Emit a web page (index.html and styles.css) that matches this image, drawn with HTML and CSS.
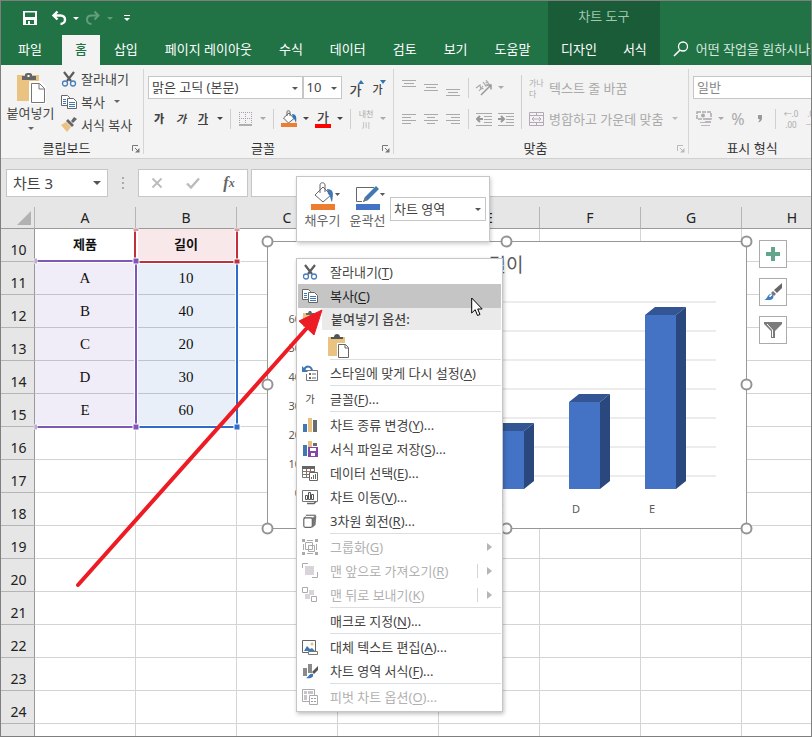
FILE: index.html
```html
<!DOCTYPE html>
<html lang="ko">
<head>
  <meta charset="UTF-8" />
  <meta name="viewport" content="width=device-width, initial-scale=1.0" />
  <title>차트 복사</title>
  <link rel="stylesheet" href="styles.css">
</head>
<body>
  <div class="window">
    <header class="top">
      <div class="top-main">
        <div class="quick">
          <button class="tool" aria-label="저장"><svg width="16" height="16" viewBox="0 0 16 16"><path d="M1 1h14v14H1z" fill="#fff"/><path d="M3 2.500h10V7H3zM4 10h8v4H4z" fill="#217346"/><path d="M6 11h2v3H6z" fill="#fff"/></svg></button>
          <button class="tool undo" aria-label="실행 취소"><svg width="16" height="16" viewBox="0 0 16 16"><path d="M6.500 1.500L2.500 5.500l4 4M3 5.500h6.500c3 0 4.500 1.800 4.500 4s-1.500 4.500-4.500 4.500" fill="none" stroke="#fff" stroke-width="2.400"/></svg></button>
          <button class="caret" aria-label="실행 취소 목록"></button>
          <button class="tool faded" aria-label="다시 실행"><svg width="16" height="16" viewBox="0 0 16 16"><path d="M9.500 1.500l4 4-4 4M13 5.500H6.500C3.500 5.500 2 7.300 2 9.500S3.500 14 6.500 14" fill="none" stroke="#fff" stroke-width="2"/></svg></button>
          <button class="caret faded" aria-label="다시 실행 목록"></button>
          <button class="tool" aria-label="빠른 실행 도구 모음 사용자 지정"><svg width="8" height="8" viewBox="0 0 8 8"><path d="M1 1.500h6" stroke="#fff"/><path d="M1 4h6L4 7z" fill="#fff"/></svg></button>
        </div>
        <nav class="tabs">
          <button class="tab file">파일</button>
          <button class="tab active">홈</button>
          <button class="tab">삽입</button>
          <button class="tab">페이지 레이아웃</button>
          <button class="tab">수식</button>
          <button class="tab">데이터</button>
          <button class="tab">검토</button>
          <button class="tab">보기</button>
          <button class="tab">도움말</button>
        </nav>
      </div>
      <div class="top-context">
        <div class="context-title">차트 도구</div>
        <nav class="tabs">
          <button class="tab">디자인</button>
          <button class="tab">서식</button>
        </nav>
      </div>
      <div class="tell">
        <svg width="16" height="16" viewBox="0 0 16 16"><circle cx="10" cy="5.500" r="4.500" fill="none" stroke="#fff" stroke-width="1.300"/><path d="M7 9l-6 6" stroke="#fff" stroke-width="1.600"/></svg>
        <input type="text" aria-label="작업 검색" placeholder="어떤 작업을 원하시나요?">
      </div>
    </header>

    <section class="ribbon">
      <div class="group clipboard">
        <div class="group-body">
          <button class="paste">
            <svg width="30" height="32" viewBox="0 0 30 32"><path d="M1 3h22v26H1z" fill="#eac282"/><path d="M6 8V4h3V2l2-1h3l2 1v2h4v4z" fill="#666"/><path d="M11.500 3h2v2h-2z" fill="#fff"/><path d="M14 10h10l5 5v16H14z" fill="#fff" stroke="#fff" stroke-width="2"/><path d="M15.500 11.500h8l5 5v14h-13zM23 11.500v5.500h5.500" fill="#fff" stroke="#777"/></svg>
            <span>붙여넣기</span>
            <i class="tri"></i>
          </button>
          <div class="clip-list">
            <button class="wide"><svg width="16" height="16" viewBox="0 0 16 16"><use href="#i-cut"/></svg>잘라내기</button>
            <button class="wide"><svg width="16" height="16" viewBox="0 0 16 16"><use href="#i-copy"/></svg>복사<i class="tri far"></i></button>
            <button class="wide"><svg width="16" height="16" viewBox="0 0 16 16"><path d="M0 8l5-3 5 5-4 5z" fill="#eac282"/><path d="M5 4l2-2 6 6-2 2zM10 4l3-4 3 2-4 4z" fill="#666"/></svg>서식 복사</button>
          </div>
        </div>
        <div class="group-foot"><span>클립보드</span><button class="launch" aria-label="클립보드 설정"><svg width="8" height="8" viewBox="0 0 8 8"><use href="#i-launch"/></svg></button></div>
      </div>

      <div class="group font">
        <div class="group-body rows">
          <div class="row">
            <span class="pick font-name"><select aria-label="글꼴"><option>맑은 고딕 (본문)</option></select></span>
            <span class="pick font-size"><select aria-label="글꼴 크기"><option>10</option></select></span>
            <button class="tool grow" aria-label="글꼴 크게">가<svg width="6" height="4" viewBox="0 0 6 4"><path d="M0 4h6L3 0z" fill="#2e75b6"/></svg></button>
            <button class="tool shrink" aria-label="글꼴 작게">가<svg width="6" height="4" viewBox="0 0 6 4"><path d="M0 0h6L3 4z" fill="#2e75b6"/></svg></button>
          </div>
          <div class="row">
            <button class="tool letter" aria-label="굵게"><b>가</b></button>
            <button class="tool letter" aria-label="기울임꼴"><em>가</em></button>
            <button class="tool letter" aria-label="밑줄"><u>가</u></button>
            <button class="caret" aria-label="밑줄 종류"></button>
            <span class="bar"></span>
            <button class="tool off" aria-label="테두리"><svg width="14" height="14" viewBox="0 0 14 14"><path d="M.5 0v12M6.500 0v12M12.500 0v12M0 .5h13M0 6.500h13" stroke="#b09cb4" stroke-dasharray="1 1"/><path d="M0 13h13" stroke="#999" stroke-width="1.500"/></svg></button>
            <button class="caret off" aria-label="테두리 종류"></button>
            <span class="bar"></span>
            <button class="tool" aria-label="채우기 색"><svg width="17" height="17" viewBox="0 0 17 17"><path d="M2.500 8l5.500-5 5 5.500-5.500 4.500z" fill="#fff" stroke="#666"/><path d="M6 6V1.500C6 .5 9 .5 9 2v4" fill="none" stroke="#666"/><path d="M11 4c4 0 5 3 4 9-1-2-1-4-3-5z" fill="#2e75b6"/><path d="M0 13h16v4H0z" fill="#ed7d31"/></svg></button>
            <button class="caret" aria-label="채우기 색 목록"></button>
            <button class="tool font-color" aria-label="글꼴 색">가</button>
            <button class="caret" aria-label="글꼴 색 목록"></button>
            <span class="bar"></span>
            <button class="tool off ruby" aria-label="윗주"><span>내천</span><span>川</span></button>
            <button class="caret off" aria-label="윗주 목록"></button>
          </div>
        </div>
        <div class="group-foot"><span>글꼴</span><button class="launch" aria-label="글꼴 설정"><svg width="8" height="8" viewBox="0 0 8 8"><use href="#i-launch"/></svg></button></div>
      </div>

      <div class="group align">
        <div class="group-body">
          <div class="rows">
            <div class="row">
              <button class="tool off" aria-label="위쪽 맞춤"><svg width="14" height="18" viewBox="0 0 14 18"><path d="M0 1.500h14M2 4.500h10M0 7.500h14" stroke="#aaa"/></svg></button>
              <button class="tool off" aria-label="가운데 맞춤"><svg width="14" height="18" viewBox="0 0 14 18"><path d="M0 5.500h14M2 8.500h10M0 11.500h14" stroke="#aaa"/></svg></button>
              <button class="tool off" aria-label="아래쪽 맞춤"><svg width="14" height="18" viewBox="0 0 14 18"><path d="M0 10.500h14M2 13.500h10M0 16.500h14" stroke="#aaa"/></svg></button>
              <span class="bar"></span>
              <button class="tool off" aria-label="방향"><svg width="18" height="18" viewBox="0 0 18 18"><path d="M6 16L16 6M11.500 6H16v4.500" fill="none" stroke="#999" stroke-width="1.500"/><path d="M1 9l4-3 1 5M4 12l4-5M6.500 9l2 1M8 3l3 4 2-2M11 1l3 4M12.500 3l-2 1" fill="none" stroke="#aaa" stroke-width="1.200"/></svg></button>
              <button class="caret off" aria-label="방향 목록"></button>
            </div>
            <div class="row">
              <button class="tool off" aria-label="왼쪽 맞춤"><svg width="14" height="12" viewBox="0 0 14 12"><path d="M0 1.500h14M0 4.500h9M0 7.500h14M0 10.500h9" stroke="#aaa"/></svg></button>
              <button class="tool off" aria-label="가운데"><svg width="14" height="12" viewBox="0 0 14 12"><path d="M0 1.500h14M3 4.500h8M0 7.500h14M3 10.500h8" stroke="#aaa"/></svg></button>
              <button class="tool off" aria-label="오른쪽 맞춤"><svg width="14" height="12" viewBox="0 0 14 12"><path d="M0 1.500h14M5 4.500h9M0 7.500h14M5 10.500h9" stroke="#aaa"/></svg></button>
              <span class="bar"></span>
              <button class="tool off" aria-label="내어쓰기"><svg width="16" height="14" viewBox="0 0 16 14"><path d="M0 1.500h16M8 4.500h8M8 7.500h8M8 10.500h8M0 13.500h16" stroke="#aaa"/><path d="M7 7H2M4 4L1 7l3 3" fill="none" stroke="#999" stroke-width="2"/></svg></button>
              <button class="tool off" aria-label="들여쓰기"><svg width="16" height="14" viewBox="0 0 16 14"><path d="M0 1.500h16M8 4.500h8M8 7.500h8M8 10.500h8M0 13.500h16" stroke="#aaa"/><path d="M0 7h5M3 4l3 3-3 3" fill="none" stroke="#999" stroke-width="2"/></svg></button>
            </div>
          </div>
          <span class="bar tall"></span>
          <div class="rows">
            <div class="row"><button class="wide off"><span class="wrap-icon"><span>가나</span><span>다</span></span>텍스트 줄 바꿈</button></div>
            <div class="row"><button class="wide off"><svg width="16" height="16" viewBox="0 0 16 16"><path d="M.5 1.500h14v13H.5zM.5 4.500h14M.5 11.500h14M7.500 1.500v3M7.500 11.500v3M3 8h9M5 6L3 8l2 2M10 6l2 2-2 2" fill="none" stroke="#b3a9b5"/></svg>병합하고 가운데 맞춤<i class="tri far"></i></button></div>
          </div>
        </div>
        <div class="group-foot"><span>맞춤</span><button class="launch off" aria-label="맞춤 설정"><svg width="8" height="8" viewBox="0 0 8 8"><use href="#i-launch"/></svg></button></div>
      </div>

      <div class="group number">
        <div class="group-body rows">
          <div class="row"><span class="pick format"><select aria-label="표시 형식"><option>일반</option></select></span></div>
          <div class="row">
            <button class="tool off" aria-label="회계 표시 형식"><svg width="17" height="16" viewBox="0 0 17 16"><path d="M1 1h14v7H1z" fill="none" stroke="#aaa" stroke-width="1.500" stroke-dasharray="4 1"/><circle cx="7" cy="4.500" r="2" fill="#aaa"/><path d="M10 7h5v2h-5zM9 10h6v2H9zM4 11h5v1H4zM5 14h9v1H5z" fill="#bdb4bf"/></svg></button>
            <button class="caret off" aria-label="통화 목록"></button>
            <button class="tool off percent" aria-label="백분율">%</button>
            <button class="tool off" aria-label="쉼표 스타일"><svg width="6" height="9" viewBox="0 0 6 9"><path d="M1 1h4v3c0 2-1 3.500-4 4.500 1-1.500 1.500-2 1.500-3.500H1z" fill="#999"/></svg></button>
            <span class="bar"></span>
            <button class="tool off digits" aria-label="자릿수 늘림"><span>←.0</span><span>.00</span></button>
            <button class="tool off digits" aria-label="자릿수 줄임"><span>.00</span><span>→.0</span></button>
          </div>
        </div>
        <div class="group-foot"><span>표시 형식</span></div>
      </div>
    </section>

    <div class="formula">
      <span class="pick name-box"><select aria-label="이름 상자"><option>차트 3</option></select></span>
      <span class="dots"><svg width="4" height="12" viewBox="0 0 4 12"><path d="M1 0h2v2H1zM1 5h2v2H1zM1 10h2v2H1z" fill="#aaa"/></svg></span>
      <div class="formula-tools">
        <button aria-label="취소"><svg width="12" height="12" viewBox="0 0 12 12"><path d="M1.500 1.500l9 9M10.500 1.500l-9 9" stroke="#bbb" stroke-width="1.800"/></svg></button>
        <button aria-label="입력"><svg width="14" height="12" viewBox="0 0 14 12"><path d="M1 6.500l4 4L13 1.500" fill="none" stroke="#bbb" stroke-width="2.400"/></svg></button>
        <button class="fx" aria-label="함수 삽입">f<small>x</small></button>
      </div>
      <input class="formula-input" type="text" aria-label="수식 입력줄">
    </div>

    <main class="sheet">
      <table class="grid">
        <thead>
          <tr>
            <th class="corner"><svg width="14" height="14" viewBox="0 0 14 14"><path d="M14 0v14H0z" fill="#b2b2b2"/></svg></th>
            <th>A</th><th>B</th><th>C</th><th>D</th><th>E</th><th>F</th><th>G</th><th>H</th>
          </tr>
        </thead>
        <tbody id="rows"></tbody>
      </table>

      <!-- source ranges of the chart -->
      <svg class="ranges" width="240" height="230" viewBox="0 0 240 230" fill="none">
        <path d="M34 54H135V220H34M135 23V55H236V23M236 55V220H135" stroke="#fff" stroke-width="4"/>
        <path d="M236 55V220H135" stroke="#2f6bc8" stroke-width="2"/>
        <path d="M134 23V55H236V23" stroke="#c0303c" stroke-width="2"/>
        <path d="M34 54H135V220H34" stroke="#7e57b8" stroke-width="2"/>
        <path d="M132 22h6v2h-6zM233 22h6v2h-6zM233 52h6v5h-6z" fill="#c0303c" stroke="#fff"/>
        <path d="M132 51h6v6h-6zM132 217h6v6h-6zM34 51h2v6h-2zM34 217h2v6h-2z" fill="#7e57b8" stroke="#fff"/>
        <path d="M233 217h6v6h-6z" fill="#2f6bc8" stroke="#fff"/>
      </svg>

      <svg class="chart" width="494" height="302" viewBox="0 0 494 302" role="img" aria-label="길이">
        <rect x="7.500" y="7.500" width="479" height="287" fill="#fff" stroke="#979797"/>
        <text class="chart-title" x="246" y="38">길이</text>
        <g id="chart-lines"></g>
        <g id="chart-bars"></g>
        <g fill="#fff" stroke="#949494" stroke-width="2">
          <circle cx="7.500" cy="7.500" r="5"/><circle cx="246.500" cy="7.500" r="5"/><circle cx="486.500" cy="7.500" r="5"/>
          <circle cx="7.500" cy="150.500" r="5"/><circle cx="486.500" cy="150.500" r="5"/>
          <circle cx="7.500" cy="294.500" r="5"/><circle cx="246.500" cy="294.500" r="5"/><circle cx="486.500" cy="294.500" r="5"/>
        </g>
      </svg>

      <div class="chart-tools">
        <button aria-label="차트 요소"><svg width="16" height="16" viewBox="0 0 16 16"><path d="M6 1h4v5h5v4h-5v5H6v-5H1V6h5z" fill="#63a58b"/></svg></button>
        <button aria-label="차트 스타일"><svg width="20" height="20" viewBox="0 0 20 20"><path d="M19 1v5l-5 5-3-3z" fill="#666"/><path d="M10 9l3 3-2 2-3-3z" fill="#777"/><path d="M1 18c4-1 3-7 8-6 3 2 1 6-2 6z" fill="#3f7fbf"/><path d="M7 15c0-1 1-2 2-2" stroke="#fff" fill="none" stroke-width="1.500"/></svg></button>
        <button aria-label="차트 필터"><svg width="18" height="18" viewBox="0 0 18 18"><path d="M0 1h18v2l-7 7v7H7v-7L0 3z" fill="#7b7b7b"/><path d="M3 3l5.500 6v7" fill="none" stroke="#fff"/></svg></button>
      </div>
    </main>

    <div class="mini">
      <button class="mini-button">
        <svg width="36" height="30" viewBox="0 0 36 30"><path d="M10 14l8-8 8 8-8 7z" fill="#fff" stroke="#666"/><path d="M15 12V4c0-3 5-3 5 0v7" fill="none" stroke="#666"/><path d="M22 8c6 0 7 3 5 13-2-3-1-6-4-8z" fill="#3f78b5"/><path d="M6 23h24v6H6z" fill="#ed7d31"/><path d="M30 12h5l-2.500 3z" fill="#555"/></svg>
        채우기
      </button>
      <button class="mini-button">
        <svg width="36" height="30" viewBox="0 0 36 30"><path d="M24 6.500H6.500v14H12" fill="none" stroke="#666"/><path d="M13 21l2-5L26 5l3 3-11 11z" fill="#3f78b5"/><path d="M13 21l2-5 3 3z" fill="#777"/><path d="M6 23h24v6H6z" fill="#4472c4"/><path d="M30 12h5l-2.500 3z" fill="#555"/></svg>
        윤곽선
      </button>
      <span class="pick element"><select aria-label="차트 요소"><option>차트 영역</option></select></span>
    </div>

    <div class="menu" role="menu">
      <button class="item" role="menuitem"><svg width="16" height="16" viewBox="0 0 16 16"><use href="#i-cut"/></svg><span>잘라내기(<u>T</u>)</span></button>
      <button class="item selected" role="menuitem"><svg width="16" height="16" viewBox="0 0 16 16"><use href="#i-copy"/></svg><span>복사(<u>C</u>)</span></button>
      <div class="paste-head"><svg width="16" height="16" viewBox="0 0 16 16"><path d="M1 2h14v14H1z" fill="#eac282"/><path d="M4 4V2h2l1-2h2l1 2h2v2z" fill="#666"/></svg><span>붙여넣기 옵션:</span></div>
      <div class="paste-row"><button aria-label="붙여넣기"><svg width="22" height="24" viewBox="0 0 22 24"><path d="M0 3h17v19H0z" fill="#eac282"/><path d="M3 5V3h3c0-4 6-4 6 0h3v2z" fill="#555"/><path d="M9 9h9l4 4v11H9z" fill="#fff"/><path d="M10.500 10.500h7l3 3v10h-10zM17 10.500v3.500h3.500" fill="#fff" stroke="#666"/></svg></button></div>
      <hr>
      <button class="item" role="menuitem"><svg width="16" height="16" viewBox="0 0 16 16"><path d="M4 5.500h11.500v10H4.500V9" fill="#fff" stroke="#777"/><path d="M7 8h2v2H7zM7 12h2v2H7zM10 8.500h4v1h-4zM10 12.500h4v1h-4z" fill="#666"/><path d="M2 5c2-5 7-4 8 0" fill="none" stroke="#3f78b5" stroke-width="2"/><path d="M0 1v6h6z" fill="#3f78b5"/></svg><span>스타일에 맞게 다시 설정(<u>A</u>)</span></button>
      <hr>
      <button class="item" role="menuitem"><span class="glyph">가</span><span>글꼴(<u>F</u>)...</span></button>
      <hr>
      <button class="item" role="menuitem"><svg width="16" height="16" viewBox="0 0 16 16"><path d="M1 7h4v8H1z" fill="#3f78b5"/><path d="M6 1h4v14H6z" fill="#e8bf7c"/><path d="M11 3h4v12h-4z" fill="#6b6b6b"/></svg><span>차트 종류 변경(<u>Y</u>)...</span></button>
      <button class="item" role="menuitem"><svg width="16" height="16" viewBox="0 0 16 16"><path d="M1 4h4v11H1z" fill="#3f78b5"/><path d="M6 0h4v6H6z" fill="#e8bf7c"/><path d="M11 2h4v3h-4z" fill="#6b6b6b"/><path d="M6 6h10v10H6z" fill="#8347a8"/><path d="M8 7h6v3H8zM9 12h4v3H9z" fill="#fff"/></svg><span>서식 파일로 저장(<u>S</u>)...</span></button>
      <button class="item" role="menuitem"><svg width="16" height="16" viewBox="0 0 16 16"><path d="M.5 1.500h12v11H.5zM.5 6.500h12M.5 9.500h12M4.500 3v9M8.500 3v9" fill="#fff" stroke="#777"/><path d="M0 1h13v3H0z" fill="#666"/><path d="M5 6.500h4" stroke="#d9632b"/><path d="M7.500 7.500h8v8h-8z" fill="#fff" stroke="#666"/><path d="M9 12h1v2H9zM11 10h1v4h-1zM13 9h1v5h-1z" fill="#666"/></svg><span>데이터 선택(<u>E</u>)...</span></button>
      <button class="item" role="menuitem"><svg width="16" height="16" viewBox="0 0 16 16"><path d="M.5 1.500h15v11H.5z" fill="#fff" stroke="#777"/><path d="M3.500 6.500h2v4h-2zM6.500 3.500h2v7h-2zM9.500 5.500h2v5h-2z" fill="none" stroke="#555"/><path d="M5 14.500h7l2-2" fill="none" stroke="#666" stroke-width="1.500"/></svg><span>차트 이동(<u>V</u>)...</span></button>
      <button class="item" role="menuitem"><svg width="16" height="16" viewBox="0 0 16 16"><path d="M1.500 5l3-3h9l.8 1.500-.8 8.500-3 2.500" fill="#777"/><path d="M4 2.500h9l-2 2H3z" fill="#fff"/><rect x="1.800" y="4.800" width="8.500" height="9.500" rx="1.500" fill="#fff" stroke="#666" stroke-width="1.200"/><path d="M4 2.200h9.500" stroke="#666"/></svg><span>3차원 회전(<u>R</u>)...</span></button>
      <hr>
      <button class="item" role="menuitem" disabled><svg width="16" height="16" viewBox="0 0 16 16"><path d="M0 0h3v3H0zM13 0h3v3h-3zM0 13h3v3H0zM13 13h3v3h-3z" fill="#aaa"/><path d="M3.500 3.500h7v7h-7zM6.500 6.500h6v6h-6zM5 1.500h6M5 14.500h6M1.500 5v6M14.500 5v6" fill="none" stroke="#aaa"/></svg><span>그룹화(<u>G</u>)</span><i class="sub"></i></button>
      <button class="item" role="menuitem" disabled><svg width="16" height="16" viewBox="0 0 16 16"><path d="M3 3h9v9H3z" fill="#d9d3da"/><path d="M.5 5V.5H6M10 14.500h5.500V9" fill="none" stroke="#aaa"/></svg><span>맨 앞으로 가져오기(<u>R</u>)</span><i class="sub split"></i></button>
      <button class="item" role="menuitem" disabled><svg width="16" height="16" viewBox="0 0 16 16"><path d="M7 3h5v5H7zM3 7h5v5H3z" fill="#d9d3da"/><path d="M.5 .5h5v5h-5zM9.500 9.500h5v5h-5z" fill="#fff" stroke="#aaa"/></svg><span>맨 뒤로 보내기(<u>K</u>)</span><i class="sub split"></i></button>
      <hr>
      <button class="item" role="menuitem"><span class="glyph"></span><span>매크로 지정(<u>N</u>)...</span></button>
      <hr>
      <button class="item" role="menuitem"><svg width="16" height="16" viewBox="0 0 16 16"><path d="M.5 1.500h13v12H.5z" fill="#fff" stroke="#666"/><path d="M2 12l3-5 3 3 2-1 3 3z" fill="#3f78b5"/><circle cx="10" cy="5" r="1.500" fill="#e8bf7c"/><path d="M6.500 12.500h9v3h-9z" fill="#fff" stroke="#777"/></svg><span>대체 텍스트 편집(<u>A</u>)...</span></button>
      <button class="item" role="menuitem"><svg width="16" height="16" viewBox="0 0 16 16"><path d="M1 5h4v8H1zM6 1h4v9H6z" fill="#8b8b8b"/><path d="M16 3v4l-4 4-2-2z" fill="#555"/><path d="M4 15c3-1 3-5 7-4 1 3-2 5-7 4z" fill="#3f78b5"/></svg><span>차트 영역 서식(<u>F</u>)...</span></button>
      <hr>
      <button class="item" role="menuitem" disabled><svg width="16" height="16" viewBox="0 0 16 16"><path d="M.5 .5h12v12H.5z" fill="#fff" stroke="#aaa"/><path d="M2 2h3v3H2zM6 2h5v3H6zM2 6h3v5H2z" fill="#c9c2cb"/><path d="M7.500 6.500h8v9h-8z" fill="#fff" stroke="#aaa"/><path d="M9 9h2v1H9zM12 9h2v1h-2zM9 12h2v1H9zM12 12h2v1h-2z" fill="#999"/></svg><span>피벗 차트 옵션(<u>O</u>)...</span></button>
    </div>

    <svg class="arrow" width="252" height="282" viewBox="0 0 252 282"><path d="M4 277L232 21" stroke="#ed1c24" stroke-width="4" stroke-linecap="round"/><path d="M248 2l-8 25-15-14z" fill="#ed1c24" stroke="#ed1c24"/></svg>
    <svg class="cursor" width="12" height="20" viewBox="0 0 12 20"><path d="M.7 1v15l3.500-3.300L6.500 18.500l2.500-1L6.700 12h4.500z" fill="#fff" stroke="#000"/></svg>
  </div>

  <svg class="defs" width="0" height="0">
    <symbol id="i-cut" viewBox="0 0 16 16"><path d="M3 1l7 9M13 1l-7 9" stroke="#5c5c5c" stroke-width="2.200"/><circle cx="4" cy="12.500" r="2.500" fill="none" stroke="#4a7ebb" stroke-width="1.300"/><circle cx="12" cy="12.500" r="2.500" fill="none" stroke="#4a7ebb" stroke-width="1.300"/></symbol>
    <symbol id="i-copy" viewBox="0 0 16 16"><path d="M.5 1.500h6l2 2v8h-8z" fill="#fff" stroke="#666"/><path d="M2 5.500h3M2 7.500h3M2 9.500h3" stroke="#3f78b5"/><path d="M6.500 4.500h6l3 3v7h-9z" fill="#fff" stroke="#666"/><path d="M8 8.500h6M8 10.500h6M8 12.500h6" stroke="#3f78b5"/></symbol>
    <symbol id="i-launch" viewBox="0 0 8 8"><path d="M.5 6V.5H6M3 3l3 3" fill="none" stroke="currentColor"/><path d="M7.500 3v4.500H3z" fill="currentColor"/></symbol>
  </svg>

  <script>
    const cells = {
      10: ['제품', '길이'],
      11: ['A', 10],
      12: ['B', 40],
      13: ['C', 20],
      14: ['D', 30],
      15: ['E', 60]
    };

    // sheet rows
    let html = '';
    for (let r = 10; r <= 25; r++) {
      html += `<tr><th>${r}</th>`;
      for (let c = 0; c < 8; c++) {
        const value = cells[r] && c < 2 ? cells[r][c] : '';
        let cls = '';
        if (r === 10 && value) cls = c ? 'head series' : 'head';
        else if (value) cls = c ? 'value' : 'category';
        html += `<td class="${cls}">${value}</td>`;
      }
      html += '</tr>';
    }
    document.getElementById('rows').innerHTML = html;

    // chart: 29px for every 10 units, floor of the front plane at 255
    const step = 29;
    let lines = '';
    for (let v = 0; v <= 6; v++) {
      const y = 242 - v * step;
      lines += `<path d="M50 ${y}H456" stroke="#d9d9d9"/>`;
      lines += `<text class="axis" x="41" y="${263 - v * step}" text-anchor="end">${v * 10}</text>`;
    }
    document.getElementById('chart-lines').innerHTML = lines;

    let bars = '';
    for (let i = 0; i < 5; i++) {
      const [name, value] = cells[11 + i];
      const x = 81 + i * 76;
      const y = 255 - value / 10 * step;
      bars += `<path d="M${x} ${y}l10 -8h31l-10 8z" fill="#335593"/>`;
      bars += `<path d="M${x + 31} ${y}l10 -8V247l-10 8z" fill="#2a477e"/>`;
      bars += `<path d="M${x} ${y}h31V255h-31z" fill="#4472c4"/>`;
      bars += `<text class="axis" x="${x + 7}" y="279" text-anchor="middle">${name}</text>`;
    }
    document.getElementById('chart-bars').innerHTML = bars;
  </script>
</body>
</html>
```
FILE: styles.css
```css
* {
  box-sizing: border-box;
}
body {
  margin: 0;
  font-family: 'Noto Sans', 'Noto Sans CJK KR', sans-serif;
  font-size: 13px;
  line-height: 18px;
  color: #444;
}
button, input, select {
  font: inherit;
  color: inherit;
  margin: 0;
  padding: 0;
  border: none;
  border-radius: 0;
  background: none;
}
button {
  white-space: nowrap;
}
svg {
  display: block;
  flex: none;
}
.defs {
  position: absolute;
}
.window {
  position: relative;
  display: flex;
  flex-direction: column;
  height: 100vh;
  border: 1px solid #7f7f7f;
  overflow: hidden;
  background: #fff;
}

/* title bar and tabs */
.top {
  display: flex;
  flex: none;
  height: 64px;
  background: #217346;
  color: #fff;
}
.top-main {
  flex: 0 0 547px;
  display: flex;
  flex-direction: column;
}
.quick {
  display: flex;
  align-items: center;
  height: 34px;
  padding-left: 18px;
}
.undo {
  margin-left: 7px;
}
.faded {
  opacity: 0.3;
}
.tabs {
  display: flex;
  gap: 1px;
  height: 30px;
}
.tab {
  padding: 0 13px 3px;
}
.file {
  padding: 0 19px 3px 17px;
}
.tab.active {
  background: #f3f3f3;
  color: #217346;
  font-weight: 500;
}
.top-context {
  background: #1a5c38;
}
.top-context .tabs {
  gap: 0;
}
.context-title {
  height: 34px;
  line-height: 30px;
  text-align: center;
  color: #9fc9b0;
}
.tell {
  flex: 1;
  min-width: 0;
  display: flex;
  align-items: center;
  gap: 7px;
  height: 30px;
  margin-top: 34px;
  padding: 0 0 3px 13px;
}
.tell input {
  flex: 1;
  min-width: 0;
  outline: none;
}
.tell input::placeholder {
  color: #d7e6dd;
}

/* ribbon */
.ribbon {
  display: flex;
  flex: none;
  background: #f3f3f3;
  border-bottom: 1px solid #d2d0ce;
}
.group {
  position: relative;
  flex: none;
  padding: 0 4px;
}
.group::after {
  content: '';
  position: absolute;
  right: 0;
  top: 4px;
  bottom: 4px;
  width: 1px;
  background: #d5d5d5;
}
.clipboard {
  width: 143px;
}
.font {
  width: 250px;
}
.align {
  width: 295px;
}
.number {
  flex: 1;
  min-width: 0;
  overflow: hidden;
  padding-right: 0;
}
.number::after {
  display: none;
}
.group-body {
  display: flex;
  height: 72px;
}
.group-body.rows {
  flex-direction: column;
}
.rows {
  padding-top: 7px;
}
.row {
  display: flex;
  align-items: center;
  height: 31px;
}
.group-foot {
  display: flex;
  height: 21px;
  padding-top: 2px;
  color: #333;
}
.group-foot span {
  flex: 1;
  text-align: center;
}
.launch {
  display: flex;
  align-items: center;
  justify-content: flex-end;
  width: 12px;
  color: #777;
}
.launch.off {
  color: #bbb;
}
.paste {
  display: flex;
  flex-direction: column;
  align-items: center;
  width: 51px;
  padding-top: 7px;
}
.paste .tri {
  margin-top: 5px;
}
.clip-list {
  display: flex;
  flex-direction: column;
  padding: 2px 0 0 5px;
}
.wide {
  display: flex;
  align-items: center;
  gap: 4px;
  height: 23px;
  text-align: left;
}
.tri {
  width: 0;
  height: 0;
  border: 3px solid transparent;
  border-top-color: #666;
  border-bottom-width: 0;
}
.tri.far {
  margin-left: 5px;
}
.tool {
  display: flex;
  align-items: center;
  justify-content: center;
  flex: none;
  width: 22px;
  height: 22px;
}
.caret {
  display: flex;
  align-items: center;
  justify-content: center;
  flex: none;
  width: 12px;
  height: 22px;
}
.caret::before {
  content: '';
  border: 3px solid transparent;
  border-top-color: currentColor;
  border-bottom-width: 0;
}
.off {
  color: #aaa;
}
.off .tri {
  border-top-color: #bbb;
}
.bar {
  flex: none;
  width: 1px;
  height: 20px;
  margin: 0 4px;
  background: #d0d0d0;
}
.bar.tall {
  height: 54px;
  margin: 10px 7px 0 4px;
}
.pick {
  position: relative;
  display: flex;
  height: 23px;
  border: 1px solid #c6c6c6;
  background: #fff;
}
.pick select {
  appearance: none;
  width: 100%;
  padding: 0 0 1px 3px;
  outline: none;
}
.pick::after {
  content: '';
  position: absolute;
  right: 4px;
  top: 50%;
  margin-top: -1px;
  border: 3px solid transparent;
  border-top-color: #555;
  border-bottom-width: 0;
  pointer-events: none;
}
.font-name {
  width: 157px;
}
.font-size {
  width: 40px;
  margin-right: 4px;
}
.format {
  width: 140px;
  flex: none;
  color: #888;
}
.grow, .shrink {
  align-items: flex-end;
  font-weight: 500;
}
.grow svg, .shrink svg {
  align-self: flex-start;
  margin: 3px 0 0 -3px;
}
.shrink {
  font-size: 11px;
}
.letter {
  font-size: 11px;
  font-weight: 700;
}
.font-color {
  width: 16px;
  height: 18px;
  margin: 0 3px;
  line-height: 14px;
  align-items: flex-start;
  font-weight: 500;
  border-bottom: 4px solid #f00;
}
.ruby, .digits, .wrap-icon {
  display: flex;
  flex-direction: column;
  font-size: 8px;
  line-height: 11px;
}
.wrap-icon {
  width: 16px;
}
.percent {
  font-size: 16px;
}

/* formula bar */
.formula {
  display: flex;
  flex: none;
  height: 48px;
  padding: 10px 0 10px 5px;
  background: #e6e6e6;
}
.name-box {
  width: 102px;
  height: 28px;
  font-size: 15px;
}
.name-box select {
  padding-left: 6px;
}
.name-box::after {
  right: 6px;
  margin-top: -2px;
  border-width: 4px 4px 0;
}
.dots {
  display: flex;
  align-items: center;
  justify-content: center;
  width: 30px;
}
.formula-tools {
  display: flex;
  width: 110px;
  margin-right: 3px;
  border: 1px solid #c6c6c6;
  background: #fff;
}
.formula-tools button {
  flex: 1;
  display: flex;
  align-items: center;
  justify-content: center;
}
.formula-tools .fx {
  font: italic bold 16px 'Liberation Serif', serif;
  color: #666;
}
.fx small {
  font-size: 12px;
}
.formula-input {
  flex: 1;
  min-width: 0;
  border: 1px solid #c6c6c6;
  border-right: none;
  background: #fff;
}

/* sheet */
.sheet {
  position: relative;
  flex: 1;
  min-height: 0;
  overflow: hidden;
}
.grid {
  table-layout: fixed;
  width: 842px;
  border-collapse: separate;
  border-spacing: 0;
}
.grid th, .grid td {
  padding: 0;
  border: solid #d4d4d4;
  border-width: 0 1px 1px 0;
}
.grid th {
  background: #e6e6e6;
  font-size: 14px;
  font-weight: 400;
  color: #222;
}
.grid thead th {
  width: 101px;
  height: 22px;
  border-bottom-color: #999;
  border-right-color: #b5b5b5;
}
.grid thead .corner {
  width: 34px;
}
.corner svg {
  margin-left: 16px;
}
.grid tbody th {
  height: 33px;
  padding: 9px 0 0 2px;
  border-right-color: #999;
  border-bottom-color: #b5b5b5;
}
.grid td {
  text-align: center;
  font-family: 'Liberation Serif', 'Noto Sans CJK KR', serif;
  font-size: 15px;
  color: #111;
}
.grid .head {
  font-size: 13px;
  font-weight: 700;
}
.grid .series {
  background: #f9e8ea;
}
.grid .category {
  background: #f1edf8;
  border-bottom-color: #c4c0cc;
}
.grid .value {
  background: #e8eff9;
  border-bottom-color: #bcc4d0;
}
.ranges {
  position: absolute;
  left: 0;
  top: 0;
}
.chart {
  position: absolute;
  left: 259px;
  top: 27px;
}
.chart-title {
  font-size: 19px;
  text-anchor: middle;
  fill: #595959;
}
.axis {
  font-size: 11px;
  fill: #595959;
}
.chart-tools {
  position: absolute;
  left: 758px;
  top: 33px;
  display: flex;
  flex-direction: column;
  gap: 10px;
}
.chart-tools button {
  display: flex;
  align-items: center;
  justify-content: center;
  width: 28px;
  height: 28px;
  border: 1px solid #ababab;
  background: #fff;
}

/* floating toolbar and menu */
.mini {
  position: absolute;
  left: 295px;
  top: 175px;
  display: flex;
  padding: 4px 3px 12px;
  border: 1px solid #c6c6c6;
  background: #fff;
  box-shadow: 1px 2px 4px rgba(0, 0, 0, 0.2);
}
.mini-button {
  display: flex;
  flex-direction: column;
  align-items: center;
  width: 45px;
  color: #666;
}
.element {
  width: 96px;
  height: 24px;
  margin-top: 16px;
}
.menu {
  position: absolute;
  left: 295px;
  top: 257px;
  width: 207px;
  padding: 1px 1px 2px;
  border: 1px solid #c6c6c6;
  background: #fff;
  box-shadow: 1px 2px 4px rgba(0, 0, 0, 0.25);
}
.item {
  display: flex;
  align-items: center;
  gap: 12px;
  width: 100%;
  height: 24px;
  padding-left: 4px;
  text-align: left;
}
.item.selected {
  background: #c5c5c5;
  color: #222;
}
.item:disabled {
  color: #b1b1b1;
}
.glyph {
  width: 16px;
  text-align: center;
  font-size: 10px;
}
.item u {
  text-underline-offset: 2px;
}
.sub {
  display: flex;
  align-items: center;
  height: 14px;
  margin-left: auto;
  padding: 0 9px;
}
.sub::before {
  content: '';
  border: 4px solid transparent;
  border-left: 5px solid #b5b5b5;
  border-right-width: 0;
}
.sub.split {
  border-left: 1px solid #d5d5d5;
}
.menu hr {
  height: 1px;
  margin: 0 0 1px 32px;
  border: none;
  background: #dcdfe2;
}
.paste-head {
  display: flex;
  align-items: center;
  height: 22px;
  padding-left: 4px;
  gap: 4px;
}
.paste-head span {
  flex: 1;
  padding-left: 9px;
  line-height: 22px;
  font-weight: 500;
  background: #eaeaea;
}
.paste-row {
  display: flex;
  align-items: center;
  height: 29px;
  padding: 3px 0 0 30px;
}
.arrow {
  position: absolute;
  left: 73px;
  top: 307px;
  pointer-events: none;
}
.cursor {
  position: absolute;
  left: 470px;
  top: 296px;
  pointer-events: none;
}
```
